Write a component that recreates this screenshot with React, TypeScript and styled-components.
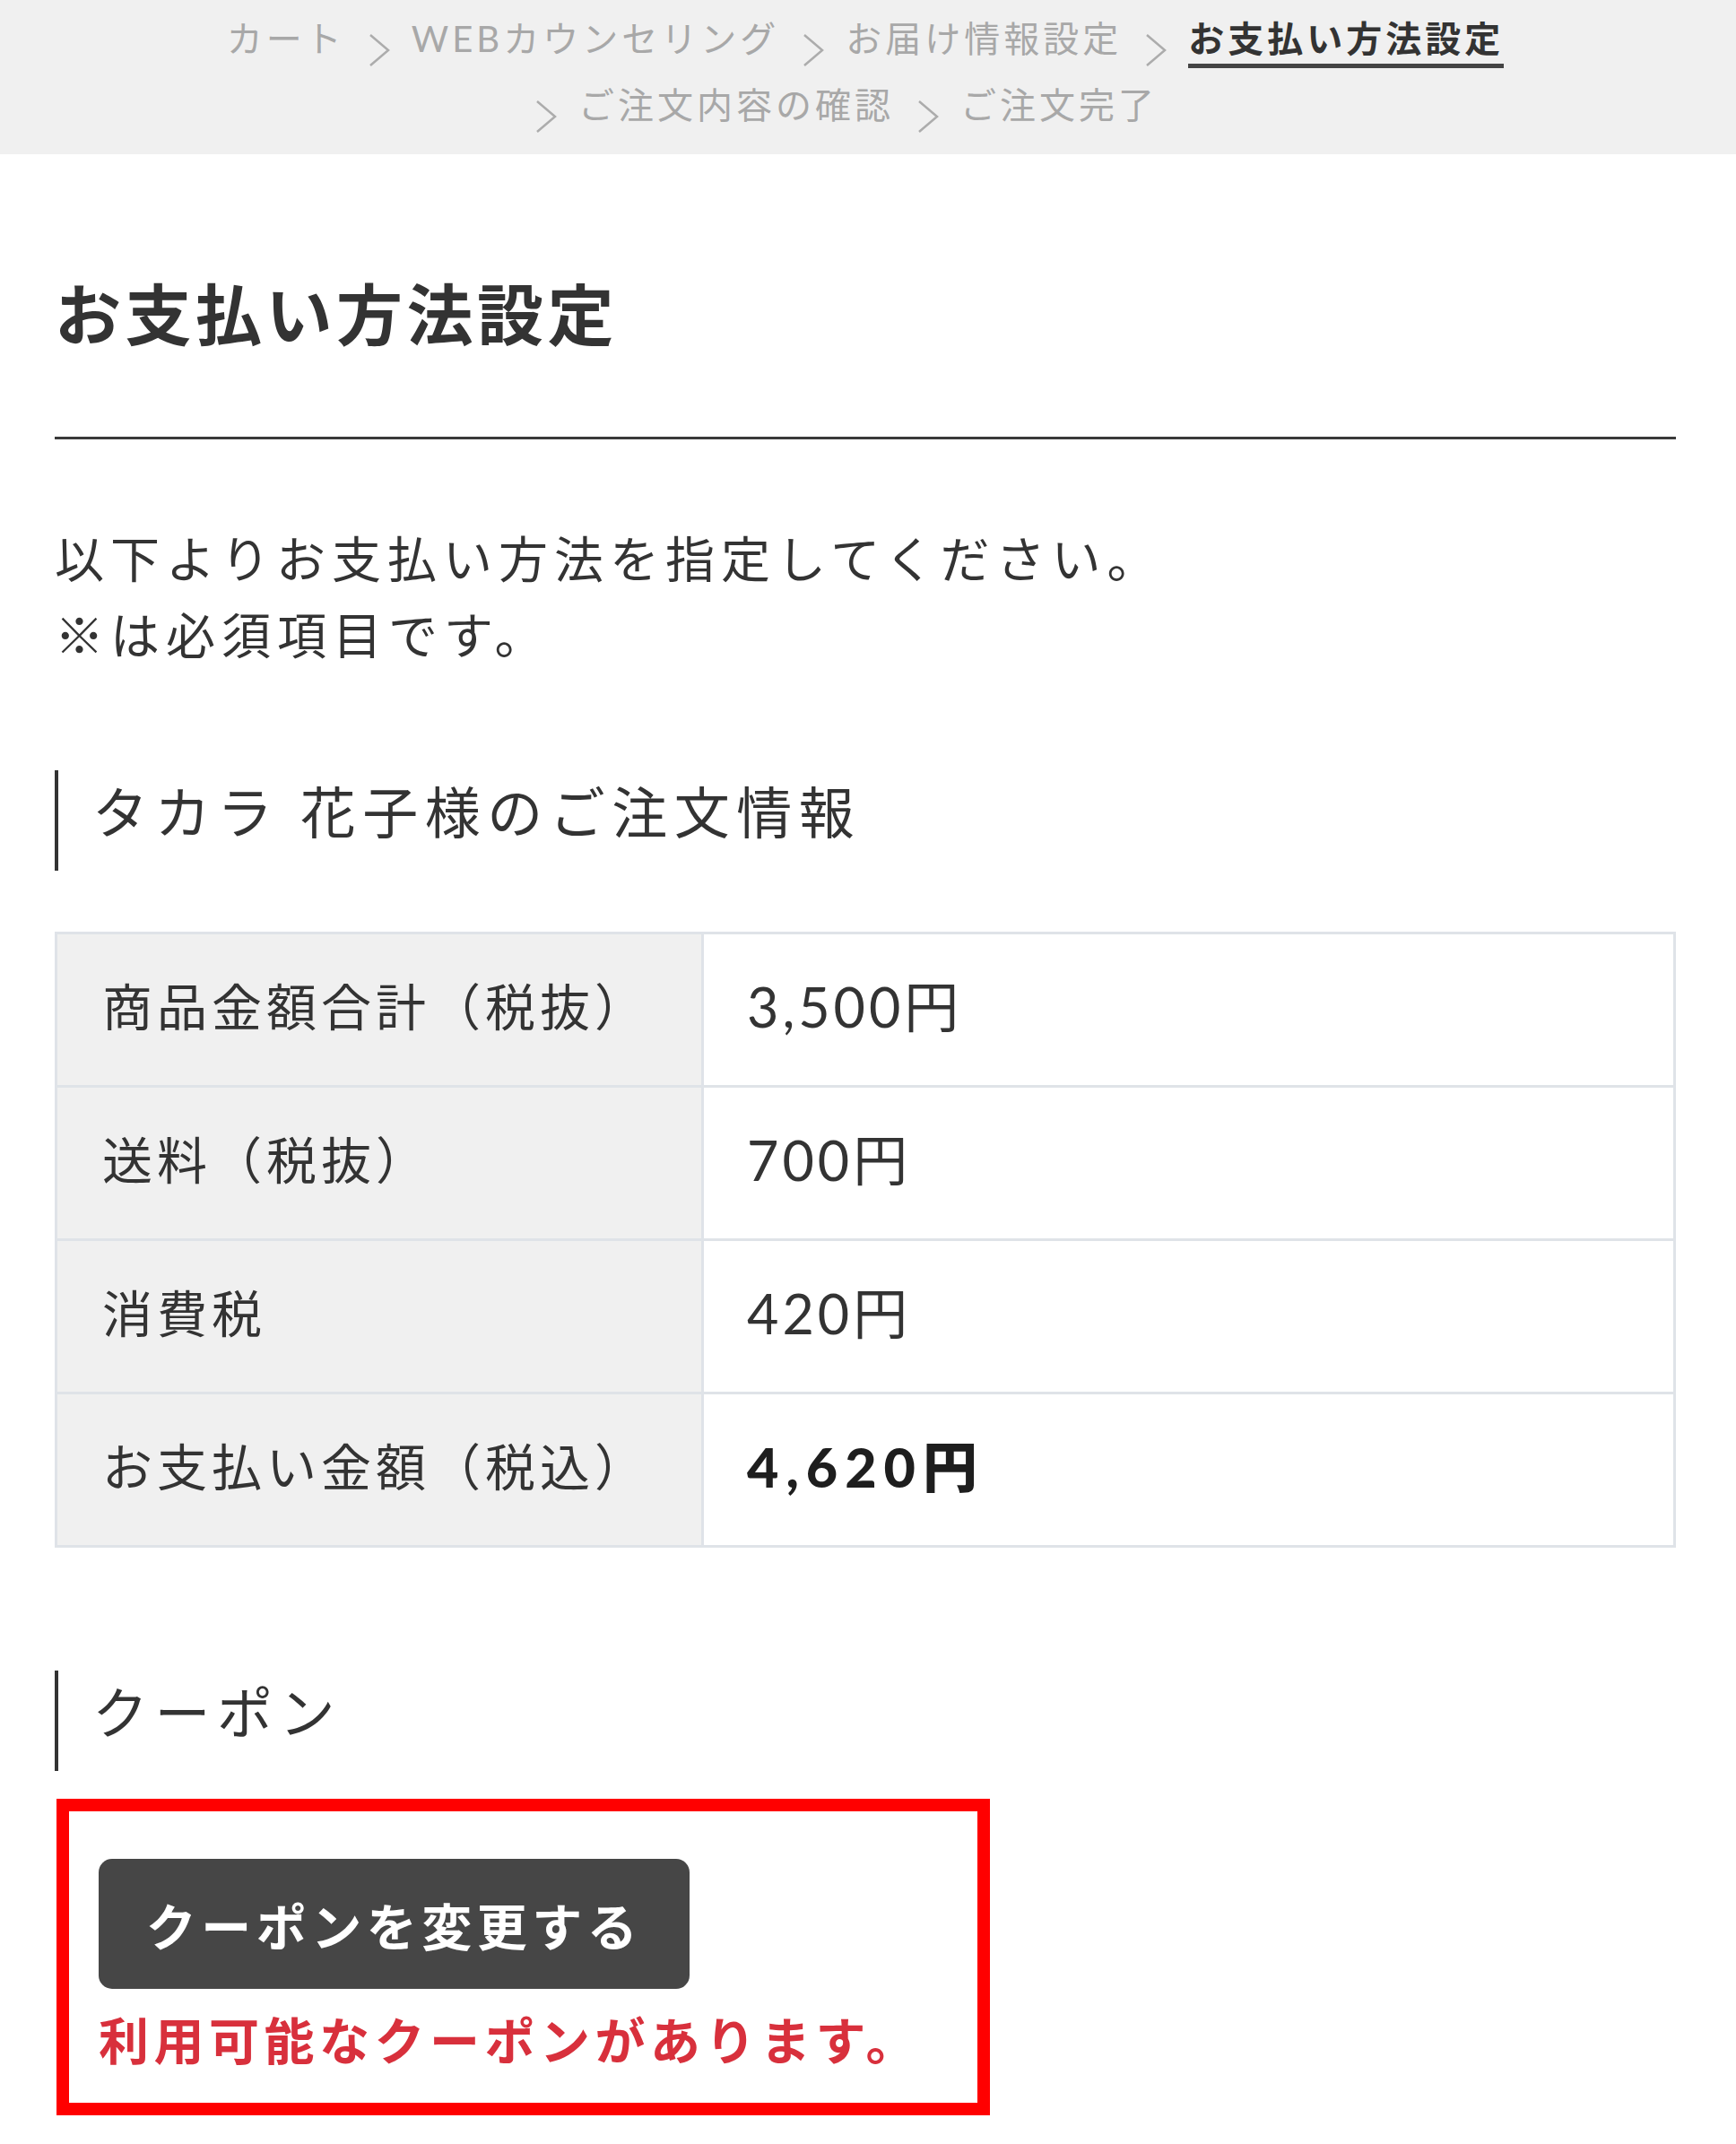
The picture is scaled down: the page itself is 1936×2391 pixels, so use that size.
import React from "react";
import styled, { createGlobalStyle } from "styled-components";

const GlobalStyle = createGlobalStyle`
  html, body {
    margin: 0;
    padding: 0;
    background: #ffffff;
  }
  body {
    font-family: "Lato", "Noto Sans CJK JP", sans-serif;
    color: #333333;
  }
  *, *::before, *::after {
    box-sizing: border-box;
  }
`;

const Page = styled.div`
  width: 1936px;
  min-height: 2391px;
  background: #ffffff;
`;

const StepBar = styled.nav`
  height: 172px;
  background: #f0f0f0;
  padding: 8px 67px 0 61px;
`;

const StepList = styled.ol`
  list-style: none;
  margin: 0;
  padding: 0;
  display: flex;
  flex-wrap: wrap;
  justify-content: center;
`;

const Step = styled.li<{ $last?: boolean }>`
  height: 74px;
  display: flex;
  align-items: center;
  margin-right: ${(p) => (p.$last ? "68px" : "0")};
`;

const StepLabel = styled.span<{ $active?: boolean }>`
  font-size: 40px;
  line-height: 56px;
  letter-spacing: 4px;
  white-space: nowrap;
  font-weight: ${(p) => (p.$active ? 700 : 400)};
  color: ${(p) => (p.$active ? "#333333" : "#a8a8a8")};
  border-bottom: 5px solid ${(p) => (p.$active ? "#444444" : "transparent")};
`;

const ChevronSvg = styled.svg`
  flex: none;
  width: 24px;
  height: 38px;
  margin: 21px 24px 0 26px;
`;

const Chevron = () => (
  <ChevronSvg viewBox="0 0 24 38" aria-hidden="true">
    <polyline
      points="2,2 22,19 2,36"
      fill="none"
      stroke="#acacac"
      strokeWidth="2.5"
    />
  </ChevronSvg>
);

const Main = styled.main`
  padding: 0 67px 0 61px;
`;

const PageTitle = styled.h1`
  margin: 127px 0 0;
  font-size: 74px;
  line-height: 104px;
  letter-spacing: 4.5px;
  font-weight: 700;
  color: #333333;
`;

const Rule = styled.hr`
  margin: 84px 0 0;
  border: 0;
  height: 3px;
  background: #3a3a3a;
`;

const Lead = styled.p`
  margin: 91px 0 0;
  font-size: 55px;
  line-height: 85px;
  letter-spacing: 7px;
  color: #333333;
`;

const SectionHeading = styled.h2<{ $gap: number }>`
  margin: ${(p) => p.$gap}px 0 0;
  height: 112px;
  border-left: 4px solid #333333;
  padding: 4px 0 0 38px;
  font-size: 62px;
  line-height: 87px;
  letter-spacing: 7.5px;
  font-weight: 400;
  color: #333333;
`;

const Summary = styled.dl`
  margin: 68px 0 0;
  display: grid;
  grid-template-columns: 721px 1fr;
  border: 3px solid #dfe3e8;
  border-bottom: 0;
`;

const Term = styled.dt`
  margin: 0;
  height: 171px;
  display: flex;
  align-items: center;
  padding: 0 48px 14px 50px;
  background: #f0f0f0;
  border-right: 3px solid #dfe3e8;
  border-bottom: 3px solid #dfe3e8;
  font-size: 56px;
  letter-spacing: 5px;
  color: #333333;
`;

const Detail = styled.dd<{ $strong?: boolean }>`
  margin: 0;
  height: 171px;
  display: flex;
  align-items: center;
  padding: 0 48px 14px 48px;
  border-bottom: 3px solid #dfe3e8;
  font-size: 61px;
  letter-spacing: ${(p) => (p.$strong ? "8px" : "4px")};
  font-weight: ${(p) => (p.$strong ? 900 : 400)};
  color: ${(p) => (p.$strong ? "#1e1e1e" : "#333333")};
`;

const CouponBox = styled.div`
  margin: 31px 0 0 2px;
  width: 1041px;
  border: 14px solid #ff0000;
  padding: 53px 0 29px 33px;
`;

const CouponButton = styled.button`
  display: block;
  width: 659px;
  height: 145px;
  padding: 0;
  border: 0;
  border-radius: 15px;
  background: #464646;
  color: #ffffff;
  font-family: inherit;
  font-size: 56px;
  font-weight: 700;
  letter-spacing: 5.5px;
  cursor: pointer;
`;

const CouponNote = styled.p`
  margin: 18px 0 0;
  font-size: 56px;
  line-height: 80px;
  font-weight: 700;
  letter-spacing: 5.5px;
  color: #d8303c;
`;

const steps = [
  "カート",
  "WEBカウンセリング",
  "お届け情報設定",
  "お支払い方法設定",
  "ご注文内容の確認",
  "ご注文完了",
];
const activeStep = 3;

const rows: { label: string; value: string; strong?: boolean }[] = [
  { label: "商品金額合計（税抜）", value: "3,500円" },
  { label: "送料（税抜）", value: "700円" },
  { label: "消費税", value: "420円" },
  { label: "お支払い金額（税込）", value: "4,620円", strong: true },
];

export default function App() {
  return (
    <Page>
      <GlobalStyle />
      <StepBar>
        <StepList>
          {steps.map((s, i) => (
            <Step key={s} $last={i === steps.length - 1}>
              {i > 0 && <Chevron />}
              <StepLabel $active={i === activeStep}>{s}</StepLabel>
            </Step>
          ))}
        </StepList>
      </StepBar>
      <Main>
        <PageTitle>お支払い方法設定</PageTitle>
        <Rule />
        <Lead>
          以下よりお支払い方法を指定してください。
          <br />
          ※は必須項目です。
        </Lead>
        <SectionHeading $gap={108}>タカラ 花子様のご注文情報</SectionHeading>
        <Summary>
          {rows.map((r) => (
            <React.Fragment key={r.label}>
              <Term>{r.label}</Term>
              <Detail $strong={r.strong}>{r.value}</Detail>
            </React.Fragment>
          ))}
        </Summary>
        <SectionHeading $gap={137}>クーポン</SectionHeading>
        <CouponBox>
          <CouponButton type="button">クーポンを変更する</CouponButton>
          <CouponNote>利用可能なクーポンがあります。</CouponNote>
        </CouponBox>
      </Main>
    </Page>
  );
}
